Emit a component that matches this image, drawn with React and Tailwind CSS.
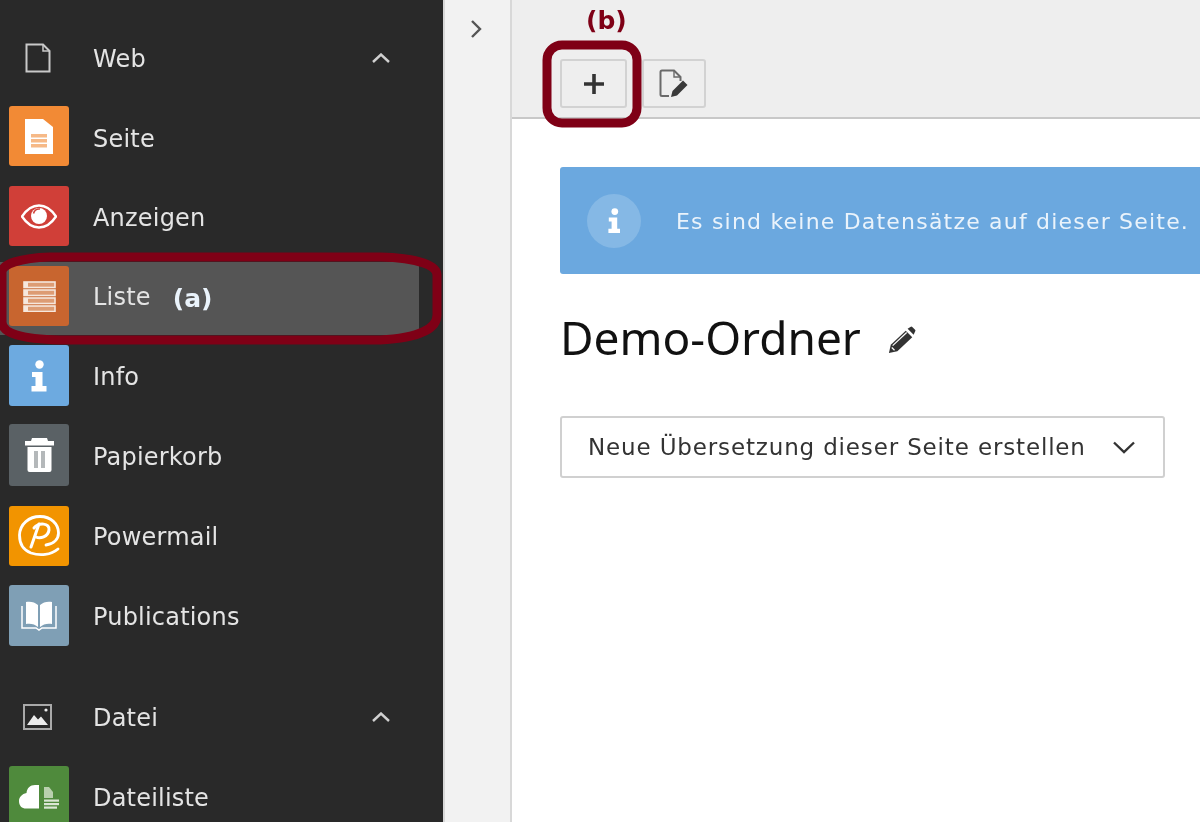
import React from "react";

const sans = "font-['DejaVu_Sans',sans-serif]";

const DocOutline = () => (
  <svg width="26" height="30" viewBox="0 0 26 30" fill="none" stroke="#c9c9c9" strokeWidth="2">
    <path d="M1.500 1.500H18L24.500 8V28.500H1.500Z" />
    <path d="M18 1.500V8H24.500" strokeWidth="1.500" />
  </svg>
);

const ImageOutline = () => (
  <svg width="30" height="26" viewBox="0 0 30 26" fill="none">
    <rect x="1" y="1" width="27" height="24" stroke="#a9a9a9" strokeWidth="2" />
    <path d="M4 21L11 11L15 15.500L18 12.500L25 21Z" fill="#ececec" />
    <circle cx="23" cy="6" r="1.600" fill="#ececec" />
  </svg>
);

const Chevron = ({ d = "M1 9L9 1.500L17 9", w = 18, h = 11, color = "#d0d0d0", sw = 2.400 }) => (
  <svg width={w} height={h} viewBox={`0 0 ${w} ${h}`} fill="none" stroke={color} strokeWidth={sw}>
    <path d={d} />
  </svg>
);

const PageIcon = () => (
  <svg width="28" height="35" viewBox="0 0 28 35">
    <path d="M0 0H18L28 8V35H0Z" fill="#fff" />
    <g fill="#f6b987">
      <rect x="6" y="15" width="16" height="3.500" />
      <rect x="6" y="20" width="16" height="3.500" />
      <rect x="6" y="25" width="16" height="3.500" />
    </g>
  </svg>
);

const EyeIcon = () => (
  <svg width="36" height="25" viewBox="0 0 36 25">
    <path d="M1 12.500C6 5 12 1.500 18 1.500S30 5 35 12.500C30 20 24 23.500 18 23.500S6 20 1 12.500Z" fill="none" stroke="#fff" strokeWidth="2.400" />
    <circle cx="18" cy="12" r="8" fill="#fff" />
    <path d="M12.500 9.500A6 6 0 0 1 19 5" fill="none" stroke="#d03f38" strokeWidth="1.600" />
  </svg>
);

const ListIcon = () => (
  <svg width="33" height="31" viewBox="0 0 33 31" fill="none">
    {[0, 8, 16, 24].map((y) => (
      <g key={y}>
        <rect x="1" y={y + 1} width="31" height="5.500" fill="#dd9c74" stroke="#f6e7dd" strokeWidth="1.600" />
        <rect x="1" y={y + 1} width="4" height="5.500" fill="#f6e7dd" />
      </g>
    ))}
  </svg>
);

const InfoGlyph = ({ scale = 1 }) => (
  <svg width={16 * scale} height={32 * scale} viewBox="0 0 16 32" fill="#fff">
    <circle cx="8.500" cy="4.500" r="4.200" />
    <path d="M1 12H11.500V26H15.500V31.500H0.500V26H4.500V17H1Z" />
  </svg>
);

const TrashIcon = () => (
  <svg width="29" height="34" viewBox="0 0 29 34">
    <path d="M7 0H22L23 3H29V7.500H0V3H6Z" fill="#fff" />
    <path d="M2.500 9H26.500V32Q26.500 34 24.500 34H4.500Q2.500 34 2.500 32Z" fill="#fff" />
    <rect x="9" y="13" width="4" height="17" fill="#b4b8ba" />
    <rect x="16" y="13" width="4" height="17" fill="#b4b8ba" />
  </svg>
);

const PowermailIcon = () => (
  <svg width="42" height="42" viewBox="0 0 42 42" fill="none" stroke="#fff" strokeLinecap="round">
    <path d="M40 34C33 40 22 41 13 38C5 35 1.500 28 1.500 20C2 9 11 1.500 22 1.500C33 1.500 40.500 9 40.500 18C40.500 24 36 29 28 30" strokeWidth="2.800" />
    <path d="M16 13C21 7 32 8 31 15C30 22 22 24 18 22" strokeWidth="3" />
    <path d="M21 9L13 32" strokeWidth="3" />
  </svg>
);

const BookIcon = () => (
  <svg width="40" height="30" viewBox="0 0 40 30">
    <path d="M7 1C11 0 16 1 19 4V26C16 23 11 22 7 23Z" fill="#fff" />
    <path d="M33 1C29 0 24 1 21 4V26C24 23 29 22 33 23Z" fill="#fff" />
    <path d="M3 5V27H17L20 29L23 27H37V5" fill="none" stroke="#fff" strokeWidth="1.500" />
  </svg>
);

const CloudIcon = () => (
  <svg width="40" height="26" viewBox="0 0 40 26">
    <path d="M20 1H16C11 1 8 4 7.500 9C3 10 0 13 0 17C0 22 3 24.500 7 24.500H20Z" fill="#fff" />
    <path d="M25 3H30L34 8V14H25Z" fill="#b9d0ae" />
    <rect x="25" y="15.500" width="15" height="2.200" fill="#dbe6d5" />
    <rect x="25" y="19" width="15" height="2.200" fill="#dbe6d5" />
    <rect x="25" y="22.500" width="13" height="2.200" fill="#dbe6d5" />
  </svg>
);

const PencilDoc = () => (
  <svg width="30" height="30" viewBox="0 0 30 30" fill="none">
    <path d="M10 27H3Q1.500 27 1.500 25.500V3Q1.500 1.500 3 1.500H15L21.500 8V12" stroke="#6a6a6a" strokeWidth="2" />
    <path d="M15 1.500V8H21.500" stroke="#6a6a6a" strokeWidth="1.400" />
    <path d="M12 28L13.500 22L24 11.500L28.500 16L18 26.500Z" fill="#3a3a3a" />
  </svg>
);

const Pencil = () => (
  <svg width="28" height="28" viewBox="0 0 30 30">
    <path d="M1 29L3 20L19 5L26 12L10 27Z" fill="#333" />
    <path d="M21 3L24 1Q25 0 26 1L29 4Q30 5 29 6L27.500 9.500Z" fill="#333" />
    <path d="M5 21L20 7" stroke="#fff" strokeWidth="1.300" />
    <path d="M4 23L7 26" stroke="#fff" strokeWidth="1.300" />
  </svg>
);

const Item = ({ bg, tile, icon, label, active, extra, row = "h-[80px]", labelClass = "" }) => (
  <div className={`flex items-center ${row}`}>
    <div className={`flex h-[73px] w-[419px] items-center pl-[9px] ${active ? "mt-[3px] bg-[#555555]" : ""}`}>
      <div className={`flex w-[60px] shrink-0 items-center justify-center rounded-[3px] ${bg} ${tile}`}>{icon}</div>
      <span className={`ml-[24px] text-[24px] leading-none tracking-[0.2px] text-[#e4e4e4] ${labelClass}`}>{label}</span>
      {extra}
    </div>
  </div>
);

const Group = ({ icon, label }) => (
  <div className="flex h-[80px] items-center">
    <div className="mb-[3px] flex w-[76px] justify-center">{icon}</div>
    <span className="ml-[17px] text-[24px] leading-none tracking-[0.2px] text-[#e4e4e4]">{label}</span>
    <div className="mb-[2px] ml-auto mr-[53px] flex">
      <Chevron />
    </div>
  </div>
);

export default function App() {
  return (
    <div className={`relative flex h-[822px] w-[1200px] overflow-hidden bg-white blur-[0.5px] ${sans}`}>
      <aside className="w-[443px] shrink-0 bg-[#292929] pt-[19px]">
        <Group icon={<DocOutline />} label="Web" />
        <Item bg="bg-[#f28a35]" tile="mb-[6px] h-[60px]" icon={<PageIcon />} label="Seite" />
        <Item bg="bg-[#d03f38]" tile="mb-[4px] h-[60px]" icon={<EyeIcon />} label="Anzeigen" row="h-[78px]" />
        <Item
          bg="bg-[#c8652f]"
          tile="mb-[5px] h-[60px]"
          icon={<ListIcon />}
          label="Liste"
          labelClass="mb-[3px]"
          active
          extra={<span className="ml-[22px] text-[25px] font-bold leading-none text-[#eaf3fb]">(a)</span>}
        />
        <Item bg="bg-[#6daae0]" tile="mb-[3px] h-[61px]" icon={<InfoGlyph />} label="Info" />
        <Item bg="bg-[#5a6165]" tile="mb-[4px] h-[62px]" icon={<TrashIcon />} label="Papierkorb" />
        <Item bg="bg-[#f29400]" tile="mb-[2px] h-[60px]" icon={<PowermailIcon />} label="Powermail" />
        <Item bg="bg-[#7f9fb5]" tile="mb-[3px] h-[61px]" icon={<BookIcon />} label="Publications" />
        <div className="h-[21px]" />
        <Group icon={<ImageOutline />} label="Datei" />
        <Item bg="bg-[#4f8a3c]" tile="mb-[2px] h-[62px]" icon={<CloudIcon />} label="Dateiliste" />
      </aside>

      <div className="flex w-[69px] shrink-0 justify-center border-x-2 border-x-[#d8d8d8] bg-[#f2f2f2] pt-[20px]">
        <div className="mr-[2px]">
          <Chevron d="M2 1L10 9L2 17" w={13} h={18} color="#555" />
        </div>
      </div>

      <main className="min-w-0 flex-1">
        <header className="flex h-[119px] flex-col border-b-2 border-b-[#c8c8c8] bg-[#eeeeee] pl-[48px] pt-[59px]">
          <div className="flex gap-[15px]">
            <button className="flex h-[49px] w-[67px] items-center justify-center rounded-[3px] border-2 border-[#d2d2d2] bg-[#eeeeee]">
              <svg width="20" height="20" viewBox="0 0 20 20" stroke="#333" strokeWidth="3.600">
                <path d="M10 0V20M0 10H20" />
              </svg>
            </button>
            <button className="flex h-[49px] w-[64px] items-center justify-center rounded-[3px] border-2 border-[#d2d2d2] bg-[#eeeeee]">
              <PencilDoc />
            </button>
          </div>
        </header>

        <div className="pl-[48px] pt-[48px]">
          <div className="flex h-[107px] w-[700px] items-center rounded-[3px] bg-[#6ba8df] pl-[27px]">
            <div className="flex h-[54px] w-[54px] items-center justify-center rounded-full bg-[#85b8e5]">
              <InfoGlyph scale={0.8} />
            </div>
            <span className="ml-[35px] mt-[2px] whitespace-nowrap text-[22px] tracking-[1.2px] text-[#eaf3fb]">
              Es sind keine Datensätze auf dieser Seite.
            </span>
          </div>

          <div className="mt-[32px] flex h-[62px] items-center">
            <h1 className="font-['Noto_Sans',sans-serif] text-[46px] leading-none text-[#111111]">Demo-Ordner</h1>
            <div className="ml-[27px] mt-[5px]">
              <Pencil />
            </div>
          </div>

          <button className="mt-[48px] flex h-[62px] w-[605px] items-center justify-between rounded-[3px] border-2 border-[#d0d0d0] bg-white pl-[26px] pr-[28px] text-[23px] tracking-[0.85px] text-[#333333]">
            <span>Neue Übersetzung dieser Seite erstellen</span>
            <Chevron d="M1 1.500L11 11L21 1.500" w={22} h={13} color="#333" />
          </button>
        </div>
      </main>

      <svg className="pointer-events-none absolute left-0 top-0" width="1200" height="822" fill="none" stroke="#7f0016">
        <path
          d="M50 257H380C420 258 437 266 437 275V315C437 328 420 338 380 340H60C20 339 2 333 2 322V272C2 264 20 258 50 257Z"
          strokeWidth="9"
        />
        <rect x="547" y="45" width="90" height="78" rx="15" strokeWidth="9" />
      </svg>
      <span className="absolute left-[586px] top-[3px] text-[25px] font-bold leading-[36px] text-[#7f0016]">(b)</span>
    </div>
  );
}
